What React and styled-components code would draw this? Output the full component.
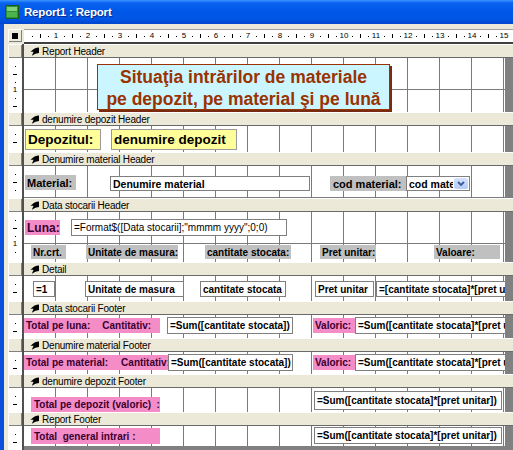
import React from 'react';
import styled, { createGlobalStyle, css } from 'styled-components';

const Global = createGlobalStyle`
  *, *::before, *::after { box-sizing: border-box; }
  html, body { margin: 0; padding: 0; background: #ece9d8; overflow: hidden; }
  #root { width: 513px; height: 450px; }
`;

const Window = styled.div`
  width: 513px;
  height: 450px;
  display: flex;
  flex-direction: column;
  overflow: hidden;
  font-family: 'Liberation Sans', Arial, sans-serif;
`;

const TitleBar = styled.div`
  flex: none;
  height: 24px;
  display: flex;
  align-items: center;
  gap: 5px;
  padding-left: 5px;
  background: linear-gradient(to bottom, #3d95ff 0%, #0a63f0 12%, #0058e8 45%, #0055e5 80%, #0046cc 100%);
`;

const TitleText = styled.span`
  color: #fff;
  font-weight: bold;
  font-size: 11.5px;
  letter-spacing: -0.2px;
  text-shadow: 1px 1px 0 #0a2a8a;
`;

const Client = styled.div`
  flex: 1;
  min-height: 0;
  display: flex;
  flex-direction: column;
  background: #ece9d8;
  border-left: 4px solid #0a50dc;
  padding: 5px 0 0 4px;
`;

const RulerRow = styled.div`
  flex: none;
  display: flex;
  height: 15px;
`;

const Corner = styled.div`
  width: 14px;
  height: 13px;
  margin-right: 2px;
  display: flex;
  align-items: center;
  justify-content: center;
  box-shadow: inset 1px 1px #fff, inset -1px -1px #808080;
`;

const CornerSquare = styled.div`
  width: 6px;
  height: 6px;
  background: #000;
`;

const HRuler = styled.div`
  flex: 1;
  display: flex;
  align-items: center;
  padding-left: 4px;
  background: #fff;
  border-top: 1px solid #a0a0a0;
  border-bottom: 2px solid #404040;
  overflow: hidden;
`;

const RulerUnit = styled.div`
  flex: none;
  width: 32px;
  display: flex;
`;

const RulerSlot = styled.div`
  width: 8px;
  display: flex;
  align-items: center;
  justify-content: center;
  font-size: 8px;
  line-height: 8px;
  color: #000;
`;

const Dot = styled.span`
  width: 1px;
  height: 1px;
  background: #000;
`;

const Tick = styled.span`
  width: 1px;
  height: 4px;
  background: #000;
`;

const Sections = styled.div`
  flex: 1;
  min-height: 0;
  display: flex;
  flex-direction: column;
`;

const Bar = styled.div`
  flex: none;
  display: flex;
  height: 14px;
`;

const BarGutter = styled.div`
  width: 16px;
  border-right: 2px solid #505050;
  box-shadow: inset 1px 1px #fff, inset -1px -1px #808080;
`;

const BarLabel = styled.div`
  flex: 1;
  display: flex;
  align-items: center;
  gap: 3px;
  padding-left: 6px;
  background: #ece9d8;
  border-top: 1px solid #fff;
  border-bottom: 1px solid #6a6a6a;
  font-size: 10px;
  letter-spacing: -0.2px;
  color: #000;
  white-space: nowrap;
`;

const Body = styled.div`
  flex: none;
  display: flex;
  height: ${(p) => p.$h}px;
`;

const VRuler = styled.div`
  width: 16px;
  border-right: 2px solid #505050;
  background: #fff;
  display: flex;
  flex-direction: column;
  align-items: center;
  padding-top: 4px;
  overflow: hidden;
`;

const VSlot = styled.div`
  flex: none;
  height: 8px;
  display: flex;
  align-items: center;
  justify-content: center;
  font-size: 8px;
  line-height: 8px;
  color: #000;
`;

const HDash = styled.span`
  width: 4px;
  height: 1px;
  background: #000;
`;

const Canvas = styled.div`
  position: relative;
  flex: none;
  width: 481px;
  overflow: hidden;
  background-color: #fff;
  background-image: linear-gradient(to right, #7a7a7a 1px, transparent 1px),
    linear-gradient(to bottom, #7a7a7a 1px, transparent 1px);
  background-size: 32px 32px, 32px 32px;
  background-position: 31px 0, 0 31px;
`;

const Beyond = styled.div`
  flex: 1;
  background: #808080;
`;

const Tail = styled.div`
  flex: 1;
  display: flex;
`;

const TailGutter = styled.div`
  width: 16px;
  border-right: 2px solid #505050;
  background: #fff;
`;

const kinds = {
  yellow: css`
    background: #ffff99;
    border: 1px solid #9a9a9a;
    padding-left: 2px;
  `,
  gray: css`
    background: #c0c0c0;
  `,
  pink: css`
    background: #f48cc8;
    color: #3a0030;
  `,
  box: css`
    background: #fff;
    border: 1px solid #7f7f7f;
  `,
};

const Control = styled.div`
  position: absolute;
  left: ${(p) => p.$x}px;
  top: ${(p) => p.$y}px;
  width: ${(p) => p.$w}px;
  height: ${(p) => p.$h}px;
  display: flex;
  align-items: center;
  padding-left: ${(p) => p.$pl ?? 2}px;
  white-space: pre;
  overflow: hidden;
  font-weight: ${(p) => (p.$normal ? 'normal' : 'bold')};
  font-size: ${(p) => p.$fs || 10}px;
  color: ${(p) => p.$color || '#000'};
  ${(p) => kinds[p.$kind]}
`;

const Gap = styled.span`
  display: inline-block;
  width: ${(p) => p.$w}px;
`;

const Combo = styled.div`
  position: absolute;
  left: ${(p) => p.$x}px;
  top: ${(p) => p.$y}px;
  width: ${(p) => p.$w}px;
  height: ${(p) => p.$h}px;
  display: flex;
  align-items: stretch;
  background: #fff;
  border: 1px solid #7f7f7f;
  font-size: 10.5px;
  font-weight: bold;
`;

const ComboText = styled.span`
  flex: 1;
  display: flex;
  align-items: center;
  padding-left: 2px;
  overflow: hidden;
  white-space: nowrap;
`;

const ComboButton = styled.span`
  width: 14px;
  margin: 1px;
  display: flex;
  align-items: center;
  justify-content: center;
  background: linear-gradient(#d6e3fd, #b4cafa);
  border-radius: 2px;
`;

const TitleBox = styled.div`
  position: absolute;
  left: 73px;
  top: 6px;
  width: 293px;
  height: 46px;
  padding-top: 1px;
  background: #ccf6ff;
  border: 1px solid #993300;
  box-shadow: 2px 2px 0 #7a2a10;
  color: #993300;
  font-weight: bold;
  font-size: 17.5px;
  line-height: 22px;
  text-align: center;
  white-space: nowrap;
`;

const SectionIcon = () => (
  <svg width="9" height="9" viewBox="0 0 9 9">
    <path d="M9 0.5 Q4.5 0.5 0.5 4.8 L3.6 4.8 L1.8 8.8 Q5.5 6.2 9 6 Z" fill="#000" />
  </svg>
);

const AppIcon = () => (
  <svg width="14" height="14" viewBox="0 0 14 14">
    <rect x="0.5" y="0.5" width="13" height="13" fill="#2f8f3a" stroke="#1a5a22" />
    <rect x="2" y="2" width="10" height="4" fill="#7fd27a" />
    <rect x="2" y="7" width="10" height="5" fill="#4db34f" />
  </svg>
);

const Chevron = () => (
  <svg width="8" height="6" viewBox="0 0 8 6">
    <path d="M1 1 L4 4 L7 1" stroke="#3d5a9a" strokeWidth="1.8" fill="none" />
  </svg>
);

const sumVal = '=Sum([cantitate stocata]*[pret unitar])';

const sections = [
  { name: 'Report Header', h: 54, title: true, controls: [] },
  {
    name: 'denumire depozit Header',
    h: 26,
    controls: [
      { k: 'yellow', x: 1, y: 3, w: 76, h: 21, fs: 13.5, parts: ['Depozitul:'] },
      { k: 'yellow', x: 87, y: 3, w: 126, h: 21, fs: 13.5, parts: ['denumire depozit'] },
    ],
  },
  {
    name: 'Denumire material Header',
    h: 32,
    controls: [
      { k: 'gray', x: 1, y: 9, w: 51, h: 15, fs: 11, parts: ['Material:'] },
      { k: 'box', x: 86, y: 10, w: 200, h: 15, fs: 10.5, parts: ['Denumire material'] },
      { k: 'gray', x: 306, y: 10, w: 76, h: 15, fs: 11, pl: 3, parts: ['cod material:'] },
      { k: 'combo', x: 382, y: 10, w: 64, h: 15, parts: ['cod material'] },
    ],
  },
  {
    name: 'Data stocarii Header',
    h: 50,
    controls: [
      { k: 'pink', x: 1, y: 8, w: 35, h: 15, fs: 12, color: '#5a0040', parts: ['Luna:'] },
      { k: 'box', x: 47, y: 7, w: 216, h: 17, normal: true, parts: ['=Format$([Data stocarii];"mmmm yyyy";0;0)'] },
      { k: 'gray', x: 7, y: 33, w: 35, h: 14, parts: ['Nr.crt.'] },
      { k: 'gray', x: 62, y: 33, w: 92, h: 14, parts: ['Unitate de masura:'] },
      { k: 'gray', x: 181, y: 33, w: 86, h: 14, parts: ['cantitate stocata:'] },
      { k: 'gray', x: 296, y: 33, w: 56, h: 14, parts: ['Pret unitar:'] },
      { k: 'gray', x: 410, y: 33, w: 66, h: 14, parts: ['Valoare:'] },
    ],
  },
  {
    name: 'Detail',
    h: 25,
    controls: [
      { k: 'box', x: 9, y: 5, w: 22, h: 16, parts: ['=1'] },
      { k: 'box', x: 61, y: 5, w: 99, h: 16, parts: ['Unitate de masura'] },
      { k: 'box', x: 176, y: 5, w: 86, h: 16, parts: ['cantitate stocata'] },
      { k: 'box', x: 291, y: 5, w: 59, h: 16, parts: ['Pret unitar'] },
      { k: 'box', x: 352, y: 5, w: 170, h: 16, parts: ['=[cantitate stocata]*[pret unitar]'] },
    ],
  },
  {
    name: 'Data stocarii Footer',
    h: 23,
    controls: [
      { k: 'pink', x: 0, y: 3, w: 136, h: 15, parts: ['Total pe luna:', 12, 'Cantitativ:'] },
      { k: 'box', x: 143, y: 2, w: 126, h: 17, parts: ['=Sum([cantitate stocata])'] },
      { k: 'pink', x: 289, y: 3, w: 42, h: 15, parts: ['Valoric:'] },
      { k: 'box', x: 331, y: 2, w: 190, h: 17, parts: [sumVal] },
    ],
  },
  {
    name: 'Denumire material Footer',
    h: 22,
    controls: [
      { k: 'pink', x: 0, y: 3, w: 146, h: 15, parts: ['Total pe material:', 14, 'Cantitativ:'] },
      { k: 'box', x: 144, y: 2, w: 125, h: 17, parts: ['=Sum([cantitate stocata])'] },
      { k: 'pink', x: 289, y: 3, w: 42, h: 15, parts: ['Valoric:'] },
      { k: 'box', x: 331, y: 2, w: 190, h: 17, parts: [sumVal] },
    ],
  },
  {
    name: 'denumire depozit Footer',
    h: 24,
    controls: [
      { k: 'pink', x: 7, y: 9, w: 129, h: 15, pl: 3, parts: ['Total pe depozit (valoric)  :'] },
      { k: 'box', x: 290, y: 3, w: 188, h: 19, parts: [sumVal] },
    ],
  },
  {
    name: 'Report Footer',
    h: 20,
    controls: [
      { k: 'pink', x: 7, y: 2, w: 129, h: 16, pl: 3, parts: ['Total  general intrari :'] },
      { k: 'box', x: 290, y: 1, w: 188, h: 17, parts: [sumVal] },
    ],
  },
];

function HorizontalRuler() {
  const units = Array.from({ length: 15 }, (_, i) => i + 1);
  return (
    <HRuler>
      {units.map((n) => (
        <RulerUnit key={n}>
          <RulerSlot><Dot /></RulerSlot>
          <RulerSlot><Tick /></RulerSlot>
          <RulerSlot><Dot /></RulerSlot>
          <RulerSlot>{n}</RulerSlot>
        </RulerUnit>
      ))}
    </HRuler>
  );
}

function VerticalRuler({ h }) {
  const count = Math.floor((h - 4) / 8);
  const slots = Array.from({ length: count }, (_, i) => i + 1);
  return (
    <VRuler>
      {slots.map((i) => (
        <VSlot key={i}>
          {i % 4 === 0 ? i / 4 : i % 2 === 0 ? <HDash /> : <Dot />}
        </VSlot>
      ))}
    </VRuler>
  );
}

function ReportControl({ c }) {
  if (c.k === 'combo') {
    return (
      <Combo $x={c.x} $y={c.y} $w={c.w} $h={c.h}>
        <ComboText>{c.parts[0]}</ComboText>
        <ComboButton><Chevron /></ComboButton>
      </Combo>
    );
  }
  return (
    <Control
      $kind={c.k}
      $x={c.x}
      $y={c.y}
      $w={c.w}
      $h={c.h}
      $fs={c.fs}
      $pl={c.pl}
      $normal={c.normal}
      $color={c.color}
    >
      {c.parts.map((p, i) => (typeof p === 'number' ? <Gap key={i} $w={p} /> : <span key={i}>{p}</span>))}
    </Control>
  );
}

function Section({ s }) {
  return (
    <>
      <Bar>
        <BarGutter />
        <BarLabel>
          <SectionIcon />
          <span>{s.name}</span>
        </BarLabel>
      </Bar>
      <Body $h={s.h}>
        <VerticalRuler h={s.h} />
        <Canvas>
          {s.title && (
            <TitleBox>
              Situaţia intrărilor de materiale
              <br />
              pe depozit, pe material şi pe lună
            </TitleBox>
          )}
          {s.controls.map((c, i) => (
            <ReportControl key={i} c={c} />
          ))}
        </Canvas>
        <Beyond />
      </Body>
    </>
  );
}

export default function App() {
  return (
    <>
      <Global />
      <Window>
        <TitleBar>
          <AppIcon />
          <TitleText>Report1 : Report</TitleText>
        </TitleBar>
        <Client>
          <RulerRow>
            <Corner>
              <CornerSquare />
            </Corner>
            <HorizontalRuler />
          </RulerRow>
          <Sections>
            {sections.map((s) => (
              <Section key={s.name} s={s} />
            ))}
            <Tail>
              <TailGutter />
              <Beyond />
            </Tail>
          </Sections>
        </Client>
      </Window>
    </>
  );
}
